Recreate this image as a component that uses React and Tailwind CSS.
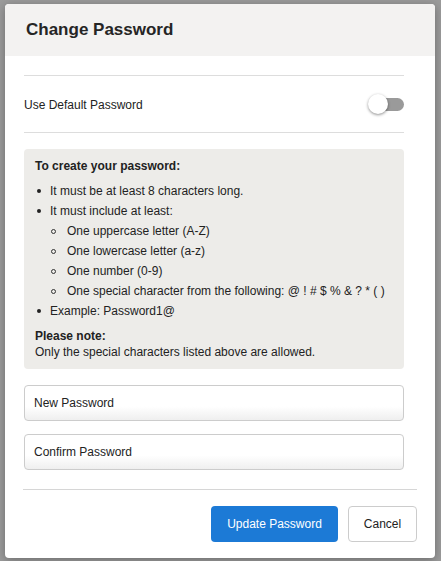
import React from "react";

const Disc = () => (
  <span className="w-[8px] flex justify-center shrink-0">
    <span className="block w-[4px] h-[4px] rounded-full bg-[#222]" />
  </span>
);
const Ring = () => (
  <span className="w-[8px] flex justify-center shrink-0">
    <span className="block w-[5px] h-[5px] rounded-full border border-[#333]" />
  </span>
);

export default function App() {
  return (
    <div
      className="w-[441px] h-[561px] overflow-hidden bg-[#9b9b9b] pt-[4px] pl-[5px] text-[#222]"
      style={{ fontFamily: '"Liberation Sans", Arial, sans-serif' }}
    >
      <div className="w-[430px] h-[554px] bg-white rounded-[4px] shadow-[0_2px_10px_rgba(0,0,0,0.3)] flex flex-col overflow-hidden">
        <div className="h-[52px] bg-[#f3f2f1] flex items-center pl-[21px] shrink-0">
          <h1 className="text-[17px] font-bold text-[#252525] leading-none pb-[1px]">Change Password</h1>
        </div>
        <div className="pl-[19px] pr-[31px] pt-[19px]">
          <div className="border-t border-[#dddddd] border-b h-[58px] flex items-center justify-between">
            <span className="text-[12px] pt-[1px]">Use Default Password</span>
            <div className="relative w-[36px] h-[20px] flex items-center">
              <div className="absolute right-0 w-[34px] h-[13px] rounded-full bg-[#9a9a9a]" />
              <div className="absolute left-[0px] top-[0px] w-[20px] h-[20px] rounded-full bg-white shadow-[0_1px_3px_rgba(0,0,0,0.45)]" />
            </div>
          </div>
          <div className="mt-[16px] bg-[#edece9] rounded-[4px] px-[11px] pt-[9px] pb-[9px] text-[12px]">
            <div className="font-bold leading-[16px]">To create your password:</div>
            <ul className="mt-[7px]">
              <li className="flex items-center h-[20px]"><Disc /><span className="ml-[7px]">It must be at least 8 characters long.</span></li>
              <li className="flex items-center h-[20px]"><Disc /><span className="ml-[7px]">It must include at least:</span></li>
              <li className="flex items-center h-[20px] pl-[14px]"><Ring /><span className="ml-[10px]">One uppercase letter (A-Z)</span></li>
              <li className="flex items-center h-[20px] pl-[14px]"><Ring /><span className="ml-[10px]">One lowercase letter (a-z)</span></li>
              <li className="flex items-center h-[20px] pl-[14px]"><Ring /><span className="ml-[10px]">One number (0-9)</span></li>
              <li className="flex items-center h-[20px] pl-[14px]"><Ring /><span className="ml-[10px]">One special character from the following: @ ! # $ % &amp; ? * ( )</span></li>
              <li className="flex items-center h-[20px]"><Disc /><span className="ml-[7px]">Example: Password1@</span></li>
            </ul>
            <div className="mt-[7px] font-bold leading-[16px]">Please note:</div>
            <div className="leading-[16px]">Only the special characters listed above are allowed.</div>
          </div>
          <div className="mt-[16px] h-[36px] rounded-[4px] border border-[#cccccc] bg-gradient-to-b from-white from-60% to-[#efefef] flex items-center pl-[9px] text-[12px]">
            New Password
          </div>
          <div className="mt-[13px] h-[36px] rounded-[4px] border border-[#cccccc] bg-gradient-to-b from-white from-60% to-[#efefef] flex items-center pl-[9px] text-[12px]">
            Confirm Password
          </div>
        </div>
        <div className="mx-[18px] mt-[19px] border-t border-[#d6d6d6] pt-[16px] flex justify-end gap-[10px]">
          <button className="h-[36px] w-[127px] rounded-[4px] bg-[#1c7ad6] text-white text-[12px]">Update Password</button>
          <button className="h-[36px] w-[69px] rounded-[4px] border border-[#cccccc] bg-white text-[12px] text-[#222]">Cancel</button>
        </div>
      </div>
    </div>
  );
}
